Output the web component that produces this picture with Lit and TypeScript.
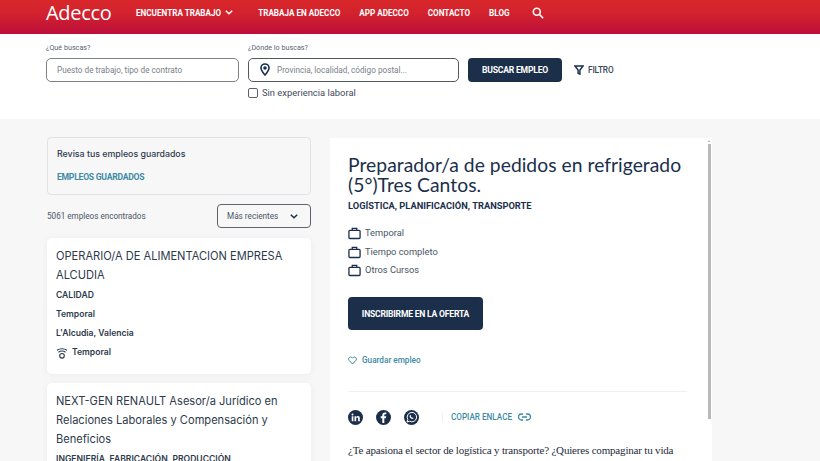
import { LitElement, html, css } from "lit";
import { customElement } from "lit/decorators.js";

const bag = html`<svg class="bag" width="13" height="13" viewBox="0 0 14 14" fill="none" stroke="#1b2f4b" stroke-width="1.4"><rect x="1" y="3.6" width="12" height="8.8" rx="1"/><path d="M4.6 3.6V1.4h4.8v2.2"/></svg>`;

const navLinks = ["TRABAJA EN ADECCO", "APP ADECCO", "CONTACTO", "BLOG"];

interface Job {
  title: string;
  area: string;
  type?: string;
  place?: string;
  contract?: string;
}

const jobs: Job[] = [
  {
    title: "OPERARIO/A DE ALIMENTACION EMPRESA ALCUDIA",
    area: "CALIDAD",
    type: "Temporal",
    place: "L'Alcudia, Valencia",
    contract: "Temporal",
  },
  {
    title: "NEXT-GEN RENAULT Asesor/a Jurídico en Relaciones Laborales y Compensación y Beneficios",
    area: "INGENIERÍA, FABRICACIÓN, PRODUCCIÓN",
  },
];

@customElement("app-root")
export class AppRoot extends LitElement {
  static styles = css`
    :host {
      display: block;
      width: 820px;
      height: 461px;
      overflow: hidden;
      background: #f7f7f8;
      font-family: Roboto, "Liberation Sans", sans-serif;
      color: #1b2f4b;
    }
    header {
      height: 34px;
      box-sizing: border-box;
      padding-left: 46px;
      display: flex;
      align-items: center;
      color: #fff;
      background: linear-gradient(180deg, #d9272a 0%, #d2222e 40%, #bd0f3b 100%);
    }
    .logo {
      font-family: "Open Sans", sans-serif;
      font-size: 20px;
      font-weight: 500;
      letter-spacing: -0.3px;
      line-height: 26px;
      width: 90px;
      margin-top: -9px;
    }
    nav {
      display: flex;
      align-items: center;
      font-size: 8.15px;
      font-weight: 700;
      margin-top: -9px;
    }
    nav a {
      margin-right: 19px;
      white-space: nowrap;
    }
    nav .drop {
      display: flex;
      align-items: center;
      gap: 4px;
      margin-right: 25px;
    }
    nav svg {
      display: block;
    }
    .search {
      height: 85px;
      background: #fff;
      box-sizing: border-box;
      padding: 9px 0 0 46px;
      display: flex;
      gap: 9px;
      align-items: flex-start;
    }
    .field {
      display: flex;
      flex-direction: column;
    }
    .field label {
      font-size: 7.2px;
      line-height: 10px;
      color: #5a6370;
      margin-bottom: 5px;
    }
    .input {
      box-sizing: border-box;
      height: 23.5px;
      border: 1px solid #7d8288;
      border-radius: 5px;
      display: flex;
      align-items: center;
      font-size: 8.2px;
      color: #7a8088;
      padding-left: 10px;
    }
    .first { width: 193px; }
    .first .input { width: 193px; }
    .second .input { width: 211px; padding-left: 11px; gap: 7px; border-color: #53585f; }
    .check {
      display: flex;
      align-items: center;
      gap: 4px;
      font-size: 9.4px;
      color: #3f4a59;
      height: 20px;
      margin-top: 1px;
    }
    .box {
      width: 8px;
      height: 8px;
      border: 1px solid #5b6068;
      border-radius: 2px;
    }
    .btn {
      background: #1b2f4b;
      color: #fff;
      font-weight: 700;
      border-radius: 4px;
      display: flex;
      align-items: center;
      justify-content: center;
      font-size: 8.6px;
      letter-spacing: -0.22px;
    }
    .find {
      width: 94px;
      height: 23.5px;
      margin-top: 15px;
    }
    .filter {
      display: flex;
      align-items: center;
      gap: 4px;
      font-size: 8.3px;
      letter-spacing: -0.15px;
      font-weight: 500;
      color: #3b4757;
      margin: 15px 0 0 3px;
      height: 23.5px;
    }
    main {
      display: flex;
      gap: 19px;
      padding: 18px 0 0 47px;
      align-items: flex-start;
    }
    .list {
      width: 264px;
      flex: none;
    }
    .saved {
      box-sizing: border-box;
      height: 58px;
      border: 1px solid #e3e3e5;
      border-radius: 4px;
      padding: 8px 9px;
    }
    .saved p {
      margin: 0;
      font: 500 8.8px/16px Inter, sans-serif;
      color: #2e3a4b;
    }
    .saved a {
      display: block;
      margin-top: 9px;
      font: 700 8.6px/12px Roboto, sans-serif;
      letter-spacing: -0.25px;
      color: #3d8aa3;
    }
    .found {
      display: flex;
      justify-content: space-between;
      align-items: center;
      margin: 9px 0 10px;
      font-size: 8.15px;
      color: #4a5563;
    }
    .sort {
      box-sizing: border-box;
      width: 94px;
      height: 24px;
      border: 1px solid #5f646c;
      border-radius: 4px;
      display: flex;
      align-items: center;
      justify-content: space-between;
      padding: 0 12px 0 9px;
      font-size: 8.2px;
    }
    .card {
      background: #fff;
      border-radius: 5px;
      box-shadow: 0 1px 8px rgba(30, 40, 60, 0.05);
      padding: 9px 9px 8px;
      margin-bottom: 9px;
      font-family: Inter, sans-serif;
      height: 136px;
      box-sizing: border-box;
    }
    .card h2 {
      margin: 0 0 1px;
      font-size: 11.1px;
      font-weight: 400;
      line-height: 19px;
      color: #2e3a4b;
    }
    .card div {
      font-size: 8.6px;
      font-weight: 600;
      line-height: 19px;
      color: #2e3a4b;
    }
    .card .contract {
      display: flex;
      align-items: center;
      gap: 4px;
    }
    .detail {
      box-sizing: border-box;
      width: 382px;
      height: 330px;
      flex: none;
      margin-top: 1px;
      background: #fff;
      padding: 17px 25px 0 18px;
      position: relative;
    }
    .bar {
      position: absolute;
      right: 1.5px;
      top: 6px;
      width: 3px;
      height: 275px;
      background: #b9b9bb;
    }
    .bar::before {
      content: "";
      position: absolute;
      left: 0.5px;
      top: -4px;
      border: 1px solid transparent;
      border-bottom: 2px solid #a9a9ab;
      border-top: 0;
    }
    .detail h1 {
      margin: 0;
      font-family: Lato, sans-serif;
      font-size: 19.3px;
      font-weight: 400;
      letter-spacing: 0.03px;
      line-height: 20px;
      color: #1b2f4b;
    }
    .areas {
      margin: 5px 0 12px;
      font-size: 9.3px;
      font-weight: 700;
      line-height: 12px;
    }
    .tag {
      display: flex;
      align-items: center;
      gap: 4px;
      font-size: 9.3px;
      line-height: 18.7px;
      color: #4a5563;
    }
    .apply {
      width: 135px;
      height: 33px;
      margin-top: 17px;
    }
    .keep {
      display: flex;
      align-items: center;
      gap: 5px;
      margin-top: 24px;
      font-size: 8.2px;
      font-weight: 500;
      color: #3d8aa3;
      line-height: 12px;
    }
    hr {
      border: 0;
      border-top: 1px solid #f0f0f1;
      margin: 25px 0 0;
    }
    .share {
      display: flex;
      align-items: center;
      gap: 13px;
      margin-top: 17px;
      height: 16px;
    }
    .share svg { display: block; }
    .copy {
      display: flex;
      align-items: center;
      gap: 6px;
      margin-left: 10px;
      padding-left: 8px;
      border-left: 1px solid #f0f0f1;
      font-size: 8.15px;
      font-weight: 500;
      color: #3d8aa3;
    }
    .desc {
      margin: 18px 0 0;
      font-family: "Liberation Serif", serif;
      font-size: 11px;
      letter-spacing: -0.18px;
      line-height: 15px;
      color: #1e2a3b;
    }
  `;

  render() {
    return html`
      <header>
        <div class="logo">Adecco</div>
        <nav>
          <a class="drop">ENCUENTRA TRABAJO
            <svg width="8" height="5" viewBox="0 0 8 5" fill="none" stroke="#fff" stroke-width="1.5"><path d="M.8.8 4 3.800 7.200.8"/></svg>
          </a>
          ${navLinks.map((l) => html`<a>${l}</a>`)}
          <svg width="12" height="12" viewBox="0 0 12 12" fill="none" stroke="#fff" stroke-width="1.6" style="margin-left:3px"><circle cx="4.800" cy="4.800" r="3.500"/><path d="m7.500 7.500 3.600 3.600"/></svg>
        </nav>
      </header>

      <section class="search">
        <div class="field first">
          <label>¿Qué buscas?</label>
          <div class="input">Puesto de trabajo, tipo de contrato</div>
        </div>
        <div class="field second">
          <label>¿Dónde lo buscas?</label>
          <div class="input">
            <svg width="10" height="13" viewBox="0 0 10 13" fill="none" stroke="#1b2f4b" stroke-width="1.6"><path d="M5 12C3 9.500 1 7.500 1 5a4 4 0 0 1 8 0c0 2.500-2 4.500-4 7Z"/><circle cx="5" cy="5" r="1" fill="#1b2f4b"/></svg>
            Provincia, localidad, código postal...
          </div>
          <div class="check"><span class="box"></span>Sin experiencia laboral</div>
        </div>
        <div class="btn find">BUSCAR EMPLEO</div>
        <div class="filter">
          <svg width="10" height="10" viewBox="0 0 11 11" fill="none" stroke="#1b2f4b" stroke-width="1.6"><path d="M1 1h9L6.500 5.500V10l-2-1V5.500Z"/></svg>
          FILTRO
        </div>
      </section>

      <main>
        <div class="list">
          <div class="saved">
            <p>Revisa tus empleos guardados</p>
            <a>EMPLEOS GUARDADOS</a>
          </div>
          <div class="found">
            <span>5061 empleos encontrados</span>
            <div class="sort">Más recientes
              <svg width="8" height="5" viewBox="0 0 8 5" fill="none" stroke="#1b2f4b" stroke-width="1.5"><path d="M.8.8 4 3.800 7.200.8"/></svg>
            </div>
          </div>
          ${jobs.map(
            (j) => html`
              <article class="card">
                <h2>${j.title}</h2>
                <div>${j.area}</div>
                ${j.type ? html`<div>${j.type}</div>` : ""}
                ${j.place ? html`<div>${j.place}</div>` : ""}
                ${j.contract
                  ? html`<div class="contract">
                      <svg width="12" height="12" viewBox="0 0 12 12" fill="none" stroke="#2e3a4b" stroke-width="1.1"><path d="M1 3.200c2.800-2 7.200-2 10 0M2.400 5.200c2-1.300 5.200-1.300 7.200 0"/><circle cx="6" cy="8.800" r="2.300"/></svg>
                      ${j.contract}
                    </div>`
                  : ""}
              </article>
            `
          )}
        </div>

        <section class="detail">
          <div class="bar"></div>
          <h1>Preparador/a de pedidos en refrigerado (5°)Tres Cantos.</h1>
          <div class="areas">LOGÍSTICA, PLANIFICACIÓN, TRANSPORTE</div>
          <div class="tag">${bag}Temporal</div>
          <div class="tag">${bag}Tiempo completo</div>
          <div class="tag">${bag}Otros Cursos</div>
          <div class="btn apply">INSCRIBIRME EN LA OFERTA</div>
          <div class="keep">
            <svg width="9" height="9" viewBox="0 0 9 9" fill="none" stroke="#3d8aa3" stroke-width="1"><path d="M4.500 8 1 4.300C-.2 2.800 1 1 2.500 1c1 0 1.600.5 2 1.200C4.900 1.500 5.500 1 6.500 1 8 1 9.200 2.800 8 4.300Z"/></svg>
            Guardar empleo
          </div>
          <hr />
          <div class="share">
            <svg width="15" height="15" viewBox="0 0 15 15"><circle cx="7.500" cy="7.500" r="7.500" fill="#1b2f4b"/><path d="M3.700 6.200h1.700v5H3.700zM4.500 3.500a1 1 0 1 1 0 2 1 1 0 0 1 0-2ZM6.500 6.200h1.600v.8c.4-.6 1-1 1.800-1 1.300 0 1.900.9 1.900 2.300v2.900h-1.700V8.600c0-.7-.3-1.100-.9-1.100-.7 0-1 .5-1 1.200v2.500H6.500Z" fill="#fff"/></svg>
            <svg width="15" height="15" viewBox="0 0 15 15"><circle cx="7.500" cy="7.500" r="7.500" fill="#1b2f4b"/><path d="M8.300 13V8.200h1.600l.3-1.900H8.300V5.200c0-.6.200-.9 1-.9h1V2.600c-.4 0-.9-.1-1.400-.1-1.600 0-2.600 1-2.600 2.600v1.200H4.700v1.900h1.600V13Z" fill="#fff"/></svg>
            <svg width="15" height="15" viewBox="0 0 15 15"><circle cx="7.500" cy="7.500" r="7.500" fill="#1b2f4b"/><path d="M3 12l.8-2.600a4.700 4.700 0 1 1 1.800 1.800Z" fill="none" stroke="#fff" stroke-width="1"/><path d="M6 5.200c-.7.600-.5 1.700.4 2.700 1 1 2.200 1.400 2.900.7l.3-.6-1-.6-.5.4c-.5-.2-1-.7-1.300-1.300l.4-.5-.6-1Z" fill="#fff"/></svg>
            <div class="copy">COPIAR ENLACE
              <svg width="13" height="8" viewBox="0 0 13 8" fill="none" stroke="#3d8aa3" stroke-width="1.3"><path d="M5 1H3.500a3 3 0 0 0 0 6H5M8 1h1.500a3 3 0 0 1 0 6H8M4 4h5"/></svg>
            </div>
          </div>
          <p class="desc">¿Te apasiona el sector de logística y transporte? ¿Quieres compaginar tu vida profesional con la personal? ¡En esta oferta, lo conseguirás con un contrato estable!</p>
        </section>
      </main>
    `;
  }
}
